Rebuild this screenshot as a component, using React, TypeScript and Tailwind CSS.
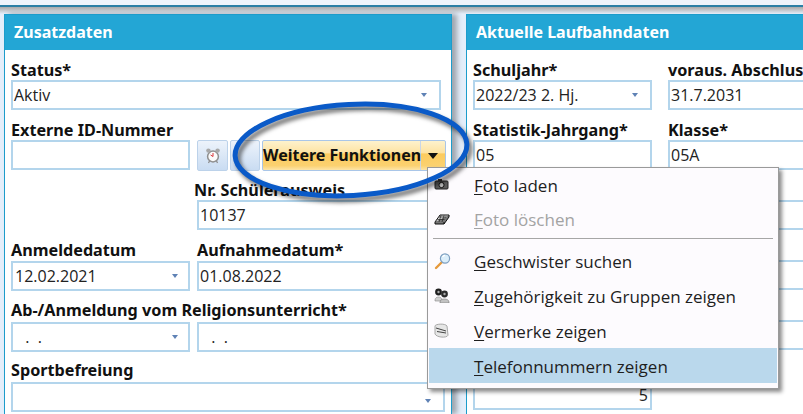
import React from 'react';

const labelFont = { fontFamily: '"Noto Sans", sans-serif' };

const Arrow: React.FC<{ className?: string }> = ({ className = '' }) => (
  <span className={`absolute top-1/2 -translate-y-1/2 w-0 h-0 border-l-[3.5px] border-r-[3.5px] border-t-[4px] border-l-transparent border-r-transparent border-t-[#5f82b5] ${className}`} />
);

const Field: React.FC<{ label?: string; value?: string; arrow?: boolean; className?: string; arrowClass?: string; valueClass?: string; labelClass?: string }> = ({
  label, value, arrow, className = '', arrowClass = 'right-[10px]', valueClass = '', labelClass = '',
}) => (
  <div className={`flex flex-col ${className}`}>
    <div className={`h-5 text-[16.2px] font-bold text-[#111] leading-5 whitespace-nowrap ${labelClass}`} style={labelFont}>{label}</div>
    <div className={`relative h-[30px] border-2 border-[#b3d5ec] bg-white text-[16px] leading-[27px] pl-[1px] pr-2 text-[#222] whitespace-nowrap ${valueClass}`}>
      {value}
      {arrow && <Arrow className={arrowClass} />}
    </div>
  </div>
);

const PanelHeader: React.FC<{ title: string }> = ({ title }) => (
  <div className="h-[35px] bg-[#23a6d5] text-white text-[16px] font-bold leading-[34px] pl-[9px]" style={labelFont}>{title}</div>
);

const ClockIcon = () => (
  <svg width="16" height="17" viewBox="0 0 16 17">
    <circle cx="8" cy="9.5" r="5.4" fill="#fbfbfb" stroke="#8f8f8f" strokeWidth="1.5" />
    <circle cx="3.4" cy="3.6" r="2.2" fill="#a8a8a8" />
    <circle cx="12.6" cy="3.6" r="2.2" fill="#a8a8a8" />
    <path d="M8 6V9.5L5.6 8" stroke="#d9363a" strokeWidth="1" fill="none" />
    <path d="M4.5 14L3.5 16M11.5 14L12.5 16" stroke="#8a8a8a" strokeWidth="1.2" />
  </svg>
);

const CameraIcon = () => (
  <svg width="16" height="13" viewBox="0 0 16 13">
    <rect x="1" y="3" width="13" height="8" rx="1" fill="#5c5c5c" stroke="#222" />
    <circle cx="7.5" cy="7" r="2.6" fill="#bbb" stroke="#111" />
    <rect x="4" y="1" width="4" height="2" fill="#333" />
  </svg>
);

const EraserIcon = () => (
  <svg width="16" height="14" viewBox="0 0 16 14">
    <path d="M1 10L6 3H15L10 10Z" fill="#ddd" stroke="#111" />
    <path d="M1 10V12H10L15 5V3M10 10V12" fill="#777" stroke="#111" />
    <path d="M5 5H12M3.5 7.5H10.5M7 3.5L5 10M10 3.5L8 10" stroke="#222" strokeWidth="0.7" />
  </svg>
);

const SearchIcon = () => (
  <svg width="18" height="18" viewBox="0 0 18 18">
    <path d="M7.5 10.5L2 16" stroke="#e69a3c" strokeWidth="2.4" strokeLinecap="round" />
    <circle cx="11" cy="6.5" r="4.6" fill="#dbeefa" stroke="#7d9fc0" strokeWidth="1.2" />
    <path d="M8.5 5A3 3 0 0 1 11 3.3" stroke="#fff" strokeWidth="1.2" fill="none" />
  </svg>
);

const GroupIcon = () => (
  <svg width="16" height="15" viewBox="0 0 16 15">
    <circle cx="4.5" cy="4" r="3.4" fill="#1f1f1f" />
    <circle cx="4.5" cy="4" r="1.2" fill="#aaa" />
    <path d="M1 12C1 8 8 8 8 12V13H1Z" fill="#d0d0d0" stroke="#888" strokeWidth="0.6" />
    <circle cx="10.5" cy="6" r="3.4" fill="#2b2b2b" />
    <circle cx="10.5" cy="6" r="1.2" fill="#aaa" />
    <path d="M6 14C6 10 15 10 15 14V15H6Z" fill="#c2c2c2" stroke="#777" strokeWidth="0.6" />
  </svg>
);

const NoteIcon = () => (
  <svg width="15" height="15" viewBox="0 0 15 15">
    <path d="M1 3C1 1 11 0 13 3L14 12C14 15 3 15 1 11Z" fill="#e6e6e6" stroke="#a8a8a8" />
    <path d="M2 5L12 8M3 8.5L12 10" stroke="#444" strokeWidth="1" />
  </svg>
);

type Item = { hot: string; rest: string; icon?: React.ReactNode; disabled?: boolean; active?: boolean; row: string; textClass?: string; iconClass?: string };

const items: Item[] = [
  { hot: 'F', rest: 'oto laden', icon: <CameraIcon />, row: 'h-[35px]', iconClass: '-mt-[3px]' },
  { hot: 'F', rest: 'oto löschen', icon: <EraserIcon />, disabled: true, row: 'h-[34px]', iconClass: '-mt-[3px]' },
];
const items2: Item[] = [
  { hot: 'G', rest: 'eschwister suchen', icon: <SearchIcon />, row: 'h-[35px]', textClass: 'pt-[3px]' },
  { hot: 'Z', rest: 'ugehörigkeit zu Gruppen zeigen', icon: <GroupIcon />, row: 'h-[35px]', textClass: 'pt-[3px]' },
  { hot: 'V', rest: 'ermerke zeigen', icon: <NoteIcon />, row: 'h-[35px]', textClass: 'pt-[3px]' },
  { hot: 'T', rest: 'elefonnummern zeigen', active: true, row: 'h-[35px]', textClass: 'pt-[3px]' },
];

const MenuRow: React.FC<{ item: Item }> = ({ item }) => (
  <div className={`flex items-center ${item.row} ${item.active ? 'bg-[#bad8ec]' : ''} ${item.disabled ? 'text-[#a3a3a3]' : 'text-[#1e1e1e]'}`}>
    <span className={`w-[45px] flex justify-start pl-[5px] shrink-0 ${item.iconClass ?? ''}`}>{item.icon}</span>
    <span className={`text-[17px] whitespace-nowrap ${item.textClass ?? ''}`}><span className="underline underline-offset-2">{item.hot}</span>{item.rest}</span>
  </div>
);

export default function App() {
  return (
    <div className="relative w-[803px] h-[414px] overflow-hidden bg-[#e4eefa]" style={{ fontFamily: '"Open Sans", sans-serif' }}>
      {/* top edge */}
      <div className="h-[7px] bg-[#eef4fb] border-b-2 border-[#2a7fa5]" />
      <div className="h-[7px] bg-gradient-to-b from-[#a9a9a9] to-[#e4eefa]" />

      <div className="flex pl-[4px] h-[400px]">
        {/* left panel */}
        <div className="w-[448px] shrink-0 bg-white border-x border-t border-[#1c9ccb] shadow-[5px_0_5px_rgba(0,0,0,0.3)]">
          <PanelHeader title="Zusatzdaten" />
          <div className="pl-[6px] pt-[10px] flex flex-col gap-[10px]">
            <Field label="Status*" value="Aktiv" arrow className="w-[430px]" arrowClass="right-[12px]" />
            <div className="flex">
              <Field label="Externe ID-Nummer" className="w-[179px] shrink-0" />
              <div className="flex self-end ml-[7px] gap-[2px] h-[31px] translate-y-[1px]">
                <button className="w-[31px] flex items-center justify-center rounded-[2px] border border-[#bcd2ea] bg-gradient-to-b from-[#edf3fb] to-[#c9dcf2]"><ClockIcon /></button>
                <button className="w-[30px] rounded-[2px] border border-[#bcd2ea] bg-gradient-to-b from-[#edf3fb] to-[#c9dcf2]" />
                <button className="w-[184px] flex rounded-[2px] border border-[#a9c6e8] bg-[linear-gradient(#fdf2cd_0%,#fde3a3_40%,#fccb5e_45%,#fbd170_85%,#fde5a8_100%)]">
                  <span className="w-[158px] h-full text-[16px] font-bold leading-[28px] text-[#111] whitespace-nowrap border-r border-[#c9d6e6] text-left" style={labelFont}>Weitere Funktionen</span>
                  <span className="flex-1 flex items-center justify-center">
                    <span className="w-0 h-0 border-l-[5px] border-r-[5px] border-t-[6px] border-l-transparent border-r-transparent border-t-[#111]" />
                  </span>
                </button>
              </div>
            </div>
            <Field label="Nr. Schülerausweis" value="10137" className="w-[244px] ml-[186px]" labelClass="-ml-[3px]" />
            <div className="flex gap-[7px] mt-[1px]">
              <Field label="Anmeldedatum" labelClass="-mt-[1px] mb-[1px]" value="12.02.2021" arrow className="w-[179px]" valueClass="pl-[2px]" />
              <Field label="Aufnahmedatum*" labelClass="-mt-[1px] mb-[1px]" value="01.08.2022" className="w-[244px]" />
            </div>
            <div className="flex gap-[7px] -mt-[1px]">
              <Field label="Ab-/Anmeldung vom Religionsunterricht*" labelClass="mb-[2px]" value=" .  ." arrow className="w-[179px]" valueClass="pl-[8px] whitespace-pre" />
              <Field label=" " labelClass="mb-[2px]" value=" .  ." className="w-[244px]" valueClass="pl-[8px] whitespace-pre" />
            </div>
            <Field label="Sportbefreiung" labelClass="mb-[2px]" arrow className="w-[434px] -mt-[2px]" arrowClass="right-[12px] translate-y-[2px]" />
          </div>
        </div>

        {/* right panel */}
        <div className="ml-[14px] flex-1 bg-white border-l border-t border-[#1c9ccb]">
          <PanelHeader title="Aktuelle Laufbahndaten" />
          <div className="pl-[6px] pt-[10px] flex flex-col gap-[10px]">
            {[
              ['Schuljahr*', '2022/23 2. Hj.', 'voraus. Abschluss', '31.7.2031'],
              ['Statistik-Jahrgang*', '05', 'Klasse*', '05A'],
              ['', '', '', ''],
              ['', '', '', ''],
              ['', '', '', ''],
              ['', '5', '', ''],
            ].map((r, i) => (
              <div key={i} className="flex gap-[16px]">
                <Field label={r[0]} value={r[1]} arrow={i === 0} className="w-[179px] shrink-0" arrowClass="right-[12px]" valueClass={i === 5 ? 'text-right !pr-[2px]' : ''} />
                {i < 5 && <Field label={r[2]} value={r[3]} className="w-[200px] shrink-0" />}
              </div>
            ))}
          </div>
        </div>
      </div>

      {/* context menu */}
      <div className="absolute left-[427px] top-[167px] w-[352px] h-[222px] border border-[#9a9a9a] bg-[#fdfbfe] shadow-[3px_3px_4px_rgba(0,0,0,0.45)] px-[1px]">
        {items.map((item, i) => <MenuRow key={i} item={item} />)}
        <div className="h-[1px] bg-[#a6a6a6] mx-[4px] mt-[1px] mb-[4px]" />
        {items2.map((item, i) => <MenuRow key={i} item={item} />)}
      </div>

      {/* highlight ellipse */}
      <svg className="absolute left-0 top-0 pointer-events-none drop-shadow-[3px_4px_2px_rgba(0,0,0,0.55)]" width="803" height="414">
        <ellipse cx="351" cy="150" rx="116" ry="45.5" transform="rotate(-3 351 150)" fill="none" stroke="#0a5ac8" strokeWidth="5" />
      </svg>
    </div>
  );
}
